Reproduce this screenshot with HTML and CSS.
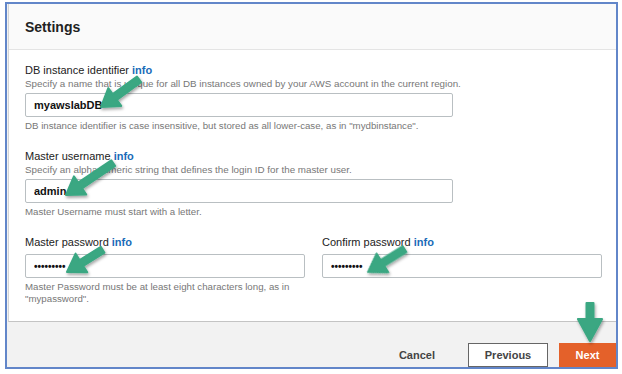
FILE: index.html
```html
<!DOCTYPE html>
<html lang="en">
<head>
  <meta charset="UTF-8">
  <title>Settings - DB instance</title>
  <link rel="stylesheet" href="styles.css">
</head>
<body>
  <div class="frame">
    <div class="card">
      <div class="card-header">Settings</div>
      <div class="card-body">
        <div class="field">
          <label for="db-id">DB instance identifier <a href="#" class="info">info</a></label>
          <p class="desc">Specify a name that is unique for all DB instances owned by your AWS account in the current region.</p>
          <input type="text" id="db-id" class="wide" value="myawslabDB">
          <p class="hint">DB instance identifier is case insensitive, but stored as all lower-case, as in "mydbinstance".</p>
        </div>

        <div class="field">
          <label for="master-user">Master username <a href="#" class="info">info</a></label>
          <p class="desc">Specify an alphanumeric string that defines the login ID for the master user.</p>
          <input type="text" id="master-user" class="wide" value="admin">
          <p class="hint">Master Username must start with a letter.</p>
        </div>

        <div class="field-row">
          <div class="field">
            <label for="master-pass">Master password <a href="#" class="info">info</a></label>
            <input type="password" id="master-pass" value="mypasswor">
            <p class="hint">Master Password must be at least eight characters long, as in "mypassword".</p>
          </div>
          <div class="field">
            <label for="confirm-pass">Confirm password <a href="#" class="info">info</a></label>
            <input type="password" id="confirm-pass" value="mypasswor">
          </div>
        </div>
      </div>
    </div>

    <div class="actions">
      <button class="btn-link">Cancel</button>
      <button class="btn-secondary">Previous</button>
      <button class="btn-primary">Next</button>
    </div>
  </div>

  <!-- callout arrows drawn over the form -->
  <svg class="callouts" width="622" height="374" viewBox="0 0 622 374">
    <defs>
      <filter id="shadow" x="-30%" y="-30%" width="160%" height="160%">
        <feDropShadow dx="1" dy="2" stdDeviation="1.5" flood-color="#000" flood-opacity="0.35"/>
      </filter>
    </defs>
    <g class="arrow" filter="url(#shadow)">
      <polygon transform="translate(101,107) rotate(144)" points="-47,-3.5 -17,-3.5 -17,-11 0,0 -17,11 -17,3.5 -47,3.5"/>
      <polygon transform="translate(66,195) rotate(146)" points="-57,-3.5 -17,-3.5 -17,-11 0,0 -17,11 -17,3.5 -57,3.5"/>
      <polygon transform="translate(67,272) rotate(148)" points="-42,-3.5 -17,-3.5 -17,-11 0,0 -17,11 -17,3.5 -42,3.5"/>
      <polygon transform="translate(368,272) rotate(148)" points="-43,-3.5 -17,-3.5 -17,-11 0,0 -17,11 -17,3.5 -43,3.5"/>
      <polygon transform="translate(590,341) rotate(90)" points="-38,-3.5 -22,-3.5 -22,-12 0,0 -22,12 -22,3.5 -38,3.5"/>
    </g>
  </svg>
</body>
</html>
```

FILE: styles.css
```css
body {
  margin: 0;
  background: #fff;
  font-family: "Liberation Sans", Arial, sans-serif;
  color: #16191f;
  position: relative;
}

.frame {
  margin: 2px 0 0 5px;
  width: 613px;
  height: 367px;
  box-sizing: border-box;
  border: 2px solid #6286c9;
  display: flex;
  flex-direction: column;
  background: #f2f2f2;
}

.card {
  margin-left: 1px;
  background: #fff;
  border-left: 1px solid #d5d5d5;
  border-bottom: 1px solid #c4c4c4;
}

.card-header {
  height: 46px;
  box-sizing: border-box;
  padding: 15px 16px 0;
  background: #fafafa;
  border-bottom: 1px solid #e4e4e4;
  font-size: 14px;
  font-weight: bold;
  color: #222;
}

.card-body {
  padding: 13px 16px 16px;
}

.field {
  display: flex;
  flex-direction: column;
  align-items: flex-start;
  margin-bottom: 17px;
}

.field-row .field {
  margin-bottom: 0;
}

.field label {
  font-size: 11px;
  line-height: 14px;
  color: #222;
}

.info {
  color: #1a6cb8;
  font-weight: bold;
  text-decoration: none;
}

.desc {
  margin: 0;
  font-size: 9.8px;
  line-height: 14px;
  color: #777;
}

.hint {
  margin: 3px 0 0;
  font-size: 9.7px;
  line-height: 12px;
  color: #777;
}

.field input {
  margin-top: 2px;
  width: 280px;
  height: 24px;
  box-sizing: border-box;
  border: 1px solid #b9bfc2;
  border-radius: 2px;
  padding: 0 8px;
  font-family: inherit;
  font-size: 11px;
  font-weight: bold;
  color: #111;
  background: #fff;
}

.field input.wide {
  width: 428px;
}

.field input[type="password"] {
  margin-top: 5px;
  font-size: 10px;
  letter-spacing: 0;
}

.field-row {
  display: grid;
  grid-template-columns: 280px 280px;
  column-gap: 17px;
}

.actions {
  flex: 1;
  display: flex;
  justify-content: flex-end;
  align-items: flex-end;
  gap: 11px;
}

.actions button {
  height: 24px;
  font-family: inherit;
  font-size: 11px;
  font-weight: bold;
  cursor: pointer;
}

.btn-link {
  border: none;
  background: none;
  color: #444;
  margin-right: 16px;
}

.btn-secondary {
  width: 80px;
  background: #fff;
  border: 1px solid #666;
  color: #444;
}

.btn-primary {
  width: 57px;
  background: #e4612a;
  border: none;
  color: #fff;
}

.callouts {
  position: absolute;
  top: 0;
  left: 0;
  pointer-events: none;
}

.arrow polygon {
  fill: #3aa782;
  stroke: #3aa782;
  stroke-width: 2;
  stroke-linejoin: round;
}
```
